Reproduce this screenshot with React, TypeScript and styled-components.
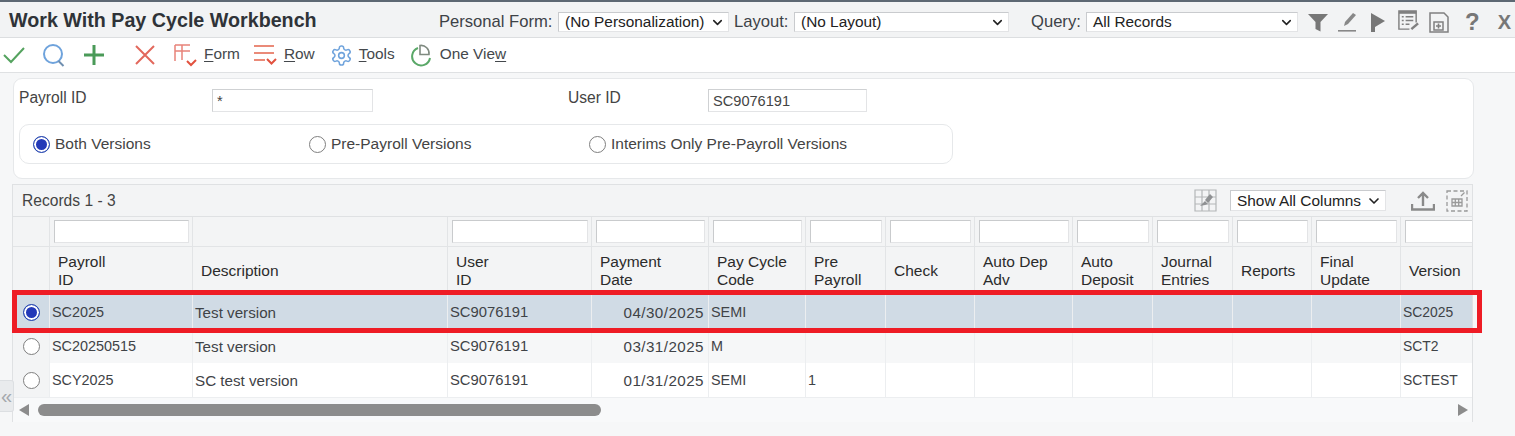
import React from "react";
import styled, { createGlobalStyle } from "styled-components";
import { ChevronDown } from "lucide-react";

const Global = createGlobalStyle`
  html, body { margin: 0; padding: 0; background: #f6f7f8; }
  body { font-family: "Liberation Sans", Arial, sans-serif; color: #333; width: 1515px; height: 436px; overflow: hidden; }
  * { box-sizing: border-box; }
`;

const Page = styled.div`
  position: relative;
  width: 1515px;
  height: 436px;
  border-top: 2px solid #5d6873;
`;

const TitleBar = styled.header`
  height: 36px;
  display: flex;
  align-items: center;
  background: #f2f3f4;
  border-bottom: 1px solid #dcdee0;
  padding: 5px 0 0 9px;
`;

const Title = styled.h1`
  margin: 0 0 4px;
  width: 430px;
  flex: none;
  font-size: 19.7px;
  font-weight: 700;
  letter-spacing: 0;
  color: #2f3338;
  white-space: nowrap;
`;

const FieldLabel = styled.span<{ $w: number; $pl?: number }>`
  width: ${(p) => p.$w}px;
  flex: none;
  padding-left: ${(p) => p.$pl ?? 0}px;
  font-size: 16.6px;
  color: #3d4247;
  white-space: nowrap;
`;

const SelectBox = styled.div<{ $w: number; $h?: number }>`
  width: ${(p) => p.$w}px;
  height: ${(p) => p.$h ?? 20}px;
  flex: none;
  display: flex;
  align-items: center;
  justify-content: space-between;
  padding: 0 3px 0 6px;
  background: #fff;
  border: 1px solid #e3e4e6;
  border-top-color: #c9cbce;
  border-left-color: #c9cbce;
  font-size: 15.4px;
  color: #222;
  white-space: nowrap;
`;

const HeadIcons = styled.div`
  display: flex;
  align-items: center;
  margin-left: 10px;
`;

const HeadIcon = styled.svg<{ $mr: number; $mb?: number }>`
  display: block;
  flex: none;
  margin-right: ${(p) => p.$mr}px;
  margin-bottom: ${(p) => p.$mb ?? 0}px;
`;

const CloseMark = styled.span`
  font-size: 20px;
  font-weight: 700;
  color: #777;
  margin-left: 18px;
`;

const HelpMark = styled.span`
  font-size: 24px;
  font-weight: 700;
  color: #777;
`;

const Toolbar = styled.nav`
  height: 35px;
  display: flex;
  align-items: center;
  background: #fff;
  border-bottom: 1px solid #dfe1e3;
  padding-left: 3px;
`;

const ToolIcon = styled.svg<{ $mr: number }>`
  display: block;
  flex: none;
  margin-right: ${(p) => p.$mr}px;
`;

const ToolText = styled.span<{ $mr?: number }>`
  font-size: 15.4px;
  color: #44484c;
  margin-right: ${(p) => p.$mr ?? 0}px;
  margin-bottom: 3px;
  u { text-underline-offset: 2px; }
`;

const Main = styled.main`
  padding: 5px 42px 0 12px;
  display: flex;
  flex-direction: column;
  gap: 5px;
`;

const SearchPanel = styled.section`
  height: 101px;
  margin-left: 1px;
  margin-right: -1px;
  background: #fff;
  border: 1px solid #e6e8ea;
  border-radius: 9px;
  padding: 10px 0 0 5px;
`;

const SearchRow = styled.div`
  display: flex;
  align-items: flex-start;
  height: 35px;
`;

const SearchLabel = styled.label<{ $w: number; $pl?: number }>`
  width: ${(p) => p.$w}px;
  flex: none;
  padding-left: ${(p) => p.$pl ?? 0}px;
  font-size: 15.6px;
  color: #444;
  line-height: 18px;
`;

const TextField = styled.input<{ $w: number }>`
  width: ${(p) => p.$w}px;
  height: 23px;
  flex: none;
  padding: 0 4px;
  background: #fff;
  border: 1px solid #e3e4e6;
  border-top-color: #cfd1d3;
  border-left-color: #cfd1d3;
  font: 14.6px "Liberation Sans", Arial, sans-serif;
  color: #444;
  outline: none;
`;

const RadioGroup = styled.div`
  width: 934px;
  height: 40px;
  display: flex;
  align-items: center;
  padding-left: 13px;
  border: 1px solid #e6e8ea;
  border-radius: 10px;
`;

const RadioItem = styled.label<{ $w: number }>`
  width: ${(p) => p.$w}px;
  flex: none;
  display: flex;
  align-items: center;
  gap: 5px;
  font-size: 15.5px;
  color: #444;
`;

const RadioDot = styled.span<{ $on?: boolean }>`
  width: 17px;
  height: 17px;
  flex: none;
  border-radius: 50%;
  background: ${(p) => (p.$on ? "#2339b8" : "#fff")};
  border: ${(p) => (p.$on ? "1.5px solid #2a4cb0" : "1.5px solid #7f7f7f")};
  box-shadow: ${(p) => (p.$on ? "inset 0 0 0 2px #fff" : "none")};
`;

const GridPanel = styled.section`
  position: relative;
  width: 1461px;
  height: 238px;
  background: #f6f7f8;
  border: 1px solid #dfe1e3;
  overflow: visible;
`;

const GridBar = styled.div`
  height: 32px;
  display: flex;
  align-items: center;
  background: #f3f4f5;
  border-bottom: 1px solid #dfe1e3;
  padding: 0 4px 0 9px;
`;

const Records = styled.span`
  font-size: 15.6px;
  color: #444;
  margin-right: auto;
`;

const BarIcon = styled.svg<{ $mr: number; $ml?: number }>`
  display: block;
  flex: none;
  margin-right: ${(p) => p.$mr}px;
  margin-left: ${(p) => p.$ml ?? 0}px;
`;

const COLUMNS = "37px 143px 255px 144px 117px 97px 80px 89px 98px 80px 80px 79px 89px 72px";

const Row = styled.div<{ $h: number; $bg: string }>`
  display: grid;
  grid-template-columns: ${COLUMNS};
  height: ${(p) => p.$h}px;
  background: ${(p) => p.$bg};
  overflow: hidden;
`;

const FilterCell = styled.div`
  padding: 3px 3px 3px 4px;
  border-right: 1px solid #e2e4e6;
  border-bottom: 1px solid #e2e4e6;
  &:last-child { border-right: 0; padding-right: 0; }
`;

const FilterInput = styled.input`
  display: block;
  width: 100%;
  height: 23px;
  padding: 0 3px;
  background: #fff;
  border: 1px solid #e3e4e6;
  border-top-color: #c9cbcd;
  border-left-color: #c9cbcd;
  outline: none;
`;

const HeadCell = styled.div`
  display: flex;
  align-items: center;
  padding: 0 2px 0 8px;
  font-size: 15.5px;
  line-height: 18px;
  color: #2b2b2b;
  border-right: 1px solid #e2e4e6;
  white-space: pre-line;
  &:last-child { border-right: 0; }
`;

const Cell = styled.div<{ $right?: boolean; $size?: number }>`
  display: flex;
  align-items: center;
  justify-content: ${(p) => (p.$right ? "flex-end" : "flex-start")};
  padding: 0 ${(p) => (p.$right ? 4 : 2)}px 0 2px;
  font-size: ${(p) => p.$size ?? 14.4}px;
  letter-spacing: ${(p) => (p.$right ? "0.45px" : "0")};
  color: #3f4347;
  white-space: nowrap;
  border-right: 1px solid #eceef0;
  &:last-child { border-right: 0; }
`;

const RadioCell = styled(Cell)`
  justify-content: center;
  padding: 0;
  background: #f3f4f5;
`;

const SelectedRadioCell = styled(Cell)`
  justify-content: center;
  padding: 0;
`;

const ScrollBar = styled.div`
  height: 25px;
  display: flex;
  align-items: center;
  padding: 0 4px 0 6px;
  background: #f8f9fa;
  border-top: 1px solid #eceef0;
`;

const Arrow = styled.span<{ $dir: "left" | "right" }>`
  width: 0;
  height: 0;
  flex: none;
  border-top: 6px solid transparent;
  border-bottom: 6px solid transparent;
  ${(p) =>
    p.$dir === "left"
      ? "border-right: 10px solid #8c8c8c;"
      : "border-left: 10px solid #8c8c8c; margin-left: auto;"}
`;

const Thumb = styled.span`
  width: 563px;
  height: 12px;
  flex: none;
  margin-left: 9px;
  border-radius: 6px;
  background: #8c8c8c;
`;

const Highlight = styled.div`
  position: absolute;
  left: -1px;
  top: 105px;
  width: 1470px;
  height: 43px;
  border: 5px solid #ee1c25;
  pointer-events: none;
`;

const SideHandle = styled.div`
  position: absolute;
  left: 0;
  top: 378px;
  width: 14px;
  height: 32px;
  display: flex;
  align-items: center;
  justify-content: center;
  background: #e9ebed;
  border: 1px solid #dcdfe2;
  border-left: 0;
  border-radius: 0 3px 3px 0;
  font-size: 20px;
  color: #a4a8ac;
`;

const headers = [
  "", "Payroll\nID", "Description", "User\nID", "Payment\nDate", "Pay Cycle\nCode", "Pre\nPayroll",
  "Check", "Auto Dep\nAdv", "Auto\nDeposit", "Journal\nEntries", "Reports", "Final\nUpdate", "Version",
];

const rows = [
  { id: "SC2025", desc: "Test version", date: "04/30/2025", code: "SEMI", pre: "", ver: "SC2025", bg: "#d0dbe5", on: true },
  { id: "SC20250515", desc: "Test version", date: "03/31/2025", code: "M", pre: "", ver: "SCT2", bg: "#f6f7f8", on: false },
  { id: "SCY2025", desc: "SC test version", date: "01/31/2025", code: "SEMI", pre: "1", ver: "SCTEST", bg: "#ffffff", on: false },
];

const hasFilter = [false, true, false, true, true, true, true, true, true, true, true, true, true, true];
const blanks = Array.from({ length: 6 });

export default function App() {
  return (
    <Page>
      <Global />
      <TitleBar>
        <Title>Work With Pay Cycle Workbench</Title>
        <FieldLabel $w={119}>Personal Form:</FieldLabel>
        <SelectBox $w={171}>(No Personalization)<ChevronDown size={15} strokeWidth={2.5} color="#222" /></SelectBox>
        <FieldLabel $w={65} $pl={5}>Layout:</FieldLabel>
        <SelectBox $w={215}>(No Layout)<ChevronDown size={15} strokeWidth={2.5} color="#222" /></SelectBox>
        <FieldLabel $w={77} $pl={22}>Query:</FieldLabel>
        <SelectBox $w={212}>All Records<ChevronDown size={15} strokeWidth={2.5} color="#222" /></SelectBox>
        <HeadIcons>
          <HeadIcon $mr={10} width="20" height="19" viewBox="0 0 20 19"><path d="M0 1h20l-7.5 8v9.5l-5-2.5V9z" fill="#777" /></HeadIcon>
          <HeadIcon $mr={13} width="19" height="20" viewBox="0 0 19 20"><path d="M15 1l3 2-8 9-4 2 1-4z" fill="#888" /><path d="M0 18h18v1.6H0z" fill="#888" /></HeadIcon>
          <HeadIcon $mr={11} width="16" height="20" viewBox="0 0 16 20"><path d="M1 1l14 8-10 6v5H1z" fill="#777" /></HeadIcon>
          <HeadIcon $mr={9} $mb={3} width="23" height="23" viewBox="0 0 24 24" fill="none" stroke="#808080" strokeWidth="1.5"><path d="M20 14V2H2v19h11" /><path d="M2 3.5h18" strokeWidth="3" /><path d="M5 8h2M9 8h8M5 12h2M9 12h8M5 16h2M9 16h4" /><path d="M15 21l7-6" strokeWidth="2.6" /></HeadIcon>
          <HeadIcon $mr={16} width="20" height="21" viewBox="0 0 20 21" fill="none" stroke="#808080" strokeWidth="1.5"><path d="M14 20h5V5l-4-4H1v19h13" /><path d="M5 10h9v8H5z" /><path d="M9.5 11.5v5M7 14h5" strokeWidth="1.6" /></HeadIcon>
          <HelpMark>?</HelpMark>
          <CloseMark>X</CloseMark>
        </HeadIcons>
      </TitleBar>

      <Toolbar>
        <ToolIcon $mr={18} width="22" height="18" viewBox="0 0 22 18" fill="none" stroke="#55a35f" strokeWidth="2"><path d="M1 9l7 7L21 2" /></ToolIcon>
        <ToolIcon $mr={18} width="22" height="23" viewBox="0 0 22 23" fill="none" stroke="#6fa3dc" strokeWidth="2"><circle cx="10" cy="10" r="9" /><path d="M15.5 17l5 5" stroke="#6f8fb0" /></ToolIcon>
        <ToolIcon $mr={30} width="22" height="22" viewBox="0 0 22 22" fill="none" stroke="#4a9a58" strokeWidth="3"><path d="M11 1v20M1 11h20" /></ToolIcon>
        <ToolIcon $mr={19} width="20" height="20" viewBox="0 0 20 20" fill="none" stroke="#e2685c" strokeWidth="2"><path d="M1 1l18 18M19 1L1 19" /></ToolIcon>
        <ToolIcon $mr={7} width="23" height="23" viewBox="0 0 23 23" fill="none" stroke="#e8837a" strokeWidth="1.5"><path d="M1 1h15M1 7h15M1 1v16M8 1v15" /><path d="M13 17l4 4 5-5" stroke="#e2523f" strokeWidth="2" /></ToolIcon>
        <ToolText $mr={14}><u>F</u>orm</ToolText>
        <ToolIcon $mr={7} width="23" height="22" viewBox="0 0 23 22" fill="none" stroke="#ea8a78" strokeWidth="2"><path d="M0 2h20M0 9h20M0 16h11" /><path d="M13 15l4.5 4.5L22 15" stroke="#e2523f" /></ToolIcon>
        <ToolText $mr={15}><u>R</u>ow</ToolText>
        <ToolIcon $mr={6} width="23" height="23" viewBox="0 0 24 24" fill="none" stroke="#6fa3dc" strokeWidth="1.6"><path d="M12.22 2h-.44a2 2 0 0 0-2 2v.18a2 2 0 0 1-1 1.73l-.43.25a2 2 0 0 1-2 0l-.15-.08a2 2 0 0 0-2.73.73l-.22.38a2 2 0 0 0 .73 2.73l.15.1a2 2 0 0 1 1 1.72v.51a2 2 0 0 1-1 1.74l-.15.09a2 2 0 0 0-.73 2.73l.22.38a2 2 0 0 0 2.73.73l.15-.08a2 2 0 0 1 2 0l.43.25a2 2 0 0 1 1 1.73V20a2 2 0 0 0 2 2h.44a2 2 0 0 0 2-2v-.18a2 2 0 0 1 1-1.73l.43-.25a2 2 0 0 1 2 0l.15.08a2 2 0 0 0 2.73-.73l.22-.39a2 2 0 0 0-.73-2.73l-.15-.08a2 2 0 0 1-1-1.74v-.5a2 2 0 0 1 1-1.74l.15-.09a2 2 0 0 0 .73-2.73l-.22-.38a2 2 0 0 0-2.73-.73l-.15.08a2 2 0 0 1-2 0l-.43-.25a2 2 0 0 1-1-1.73V4a2 2 0 0 0-2-2z" /><circle cx="12" cy="12" r="3" /></ToolIcon>
        <ToolText $mr={15}><u>T</u>ools</ToolText>
        <ToolIcon $mr={9} width="21" height="23" viewBox="0 0 21 23" fill="none" strokeWidth="2"><path d="M8 4a9 9 0 1 0 12 10" stroke="#5aa868" /><path d="M10 1.5a8 8 0 0 1 9 9h-9z" stroke="#7f8a80" strokeWidth="1.6" /></ToolIcon>
        <ToolText>One Vie<u>w</u></ToolText>
      </Toolbar>

      <Main>
        <SearchPanel>
          <SearchRow>
            <SearchLabel $w={193}>Payroll ID</SearchLabel>
            <TextField $w={161} defaultValue="*" />
            <SearchLabel $w={335} $pl={195}>User ID</SearchLabel>
            <TextField $w={159} defaultValue="SC9076191" />
          </SearchRow>
          <RadioGroup>
            <RadioItem $w={276}><RadioDot $on />Both Versions</RadioItem>
            <RadioItem $w={280}><RadioDot />Pre-Payroll Versions</RadioItem>
            <RadioItem $w={300}><RadioDot />Interims Only Pre-Payroll Versions</RadioItem>
          </RadioGroup>
        </SearchPanel>

        <GridPanel>
          <GridBar>
            <Records>Records 1 - 3</Records>
            <BarIcon $mr={13} width="23" height="23" viewBox="0 0 23 23" fill="none" stroke="#b4b6b8" strokeWidth="1.2"><path d="M1 1h21v21H1zM1 8h21M1 15h21M8 1v21M15 1v21" /><path d="M6 17l5-5 3 3-3 1zM11 11l5-6 3 3-5 6z" fill="#8f9193" stroke="none" /></BarIcon>
            <SelectBox $w={156} $h={21}>Show All Columns<ChevronDown size={16} strokeWidth={2.5} color="#222" /></SelectBox>
            <BarIcon $mr={11} $ml={25} width="24" height="20" viewBox="0 0 24 20" fill="none" stroke="#8a8a8a" strokeWidth="2.4"><path d="M12 15V3M7 7l5-5 5 5" /><path d="M1 13v5.5h22V13" /></BarIcon>
            <BarIcon $mr={0} width="22" height="22" viewBox="0 0 22 22" fill="none" stroke="#9a9a9a" strokeWidth="1.3"><path d="M1 1h20v20H1z" strokeDasharray="4 2.5" /><path d="M6 9h10v7H6zM9.3 9v7M12.7 9v7M6 12.5h10" /><path d="M15 6l3.5-3.5" /></BarIcon>
          </GridBar>
          <Row $h={30} $bg="#f3f4f5">
            {hasFilter.map((on, i) => (
              <FilterCell key={i}>{on && <FilterInput aria-label={headers[i].replace("\n", " ")} />}</FilterCell>
            ))}
          </Row>
          <Row $h={48} $bg="#f3f4f5">
            {headers.map((h, i) => <HeadCell key={i}>{h}</HeadCell>)}
          </Row>
          {rows.map((r) => (
            <Row key={r.id} $h={34} $bg={r.bg}>
              {r.on
                ? <SelectedRadioCell><RadioDot $on /></SelectedRadioCell>
                : <RadioCell><RadioDot /></RadioCell>}
              <Cell>{r.id}</Cell>
              <Cell $size={15.2}>{r.desc}</Cell>
              <Cell $size={14.8}>SC9076191</Cell>
              <Cell $right $size={15.2}>{r.date}</Cell>
              <Cell>{r.code}</Cell>
              <Cell>{r.pre}</Cell>
              {blanks.map((_, i) => <Cell key={i} />)}
              <Cell $size={13.9}>{r.ver}</Cell>
            </Row>
          ))}
          <ScrollBar>
            <Arrow $dir="left" />
            <Thumb />
            <Arrow $dir="right" />
          </ScrollBar>
          <Highlight />
        </GridPanel>
      </Main>
      <SideHandle>«</SideHandle>
    </Page>
  );
}
